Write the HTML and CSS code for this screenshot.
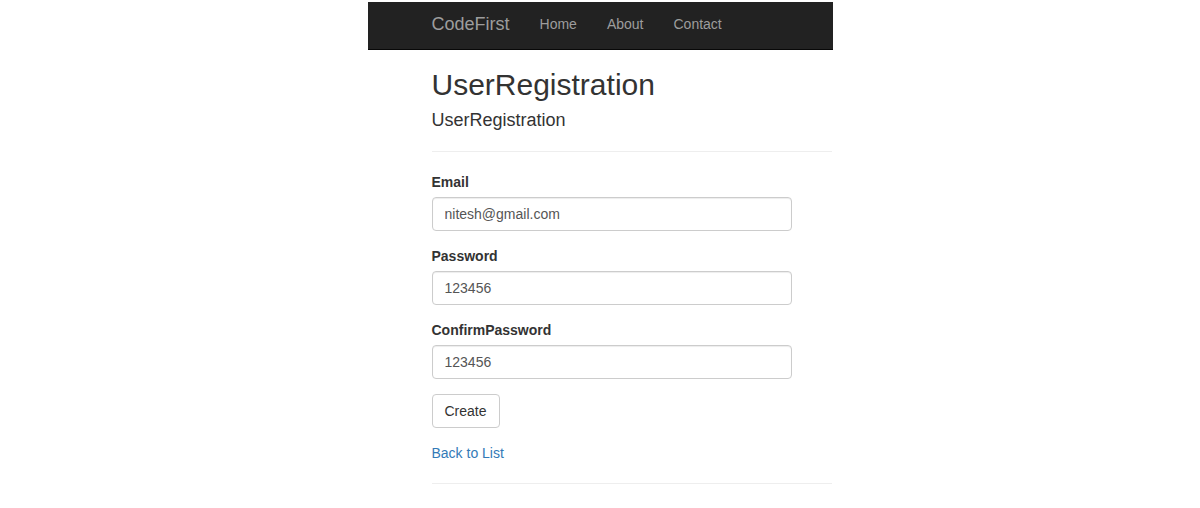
FILE: index.html
```html
<!DOCTYPE html>
<html>
<head>
<meta charset="utf-8">
<title>UserRegistration</title>
<link rel="stylesheet" href="styles.css">
</head>
<body>
<div class="page">
  <nav class="navbar">
    <a class="brand" href="#">CodeFirst</a>
    <ul class="nav">
      <li><a href="#">Home</a></li>
      <li><a href="#">About</a></li>
      <li><a href="#">Contact</a></li>
    </ul>
  </nav>
  <div class="body-content">
    <h2 class="title">UserRegistration</h2>
    <form class="form">
      <h4 class="subtitle">UserRegistration</h4>
      <hr class="rule">
      <div class="form-group">
        <label class="label">Email</label>
        <input class="input" type="text" value="nitesh@gmail.com">
      </div>
      <div class="form-group">
        <label class="label">Password</label>
        <input class="input" type="text" value="123456">
      </div>
      <div class="form-group">
        <label class="label">ConfirmPassword</label>
        <input class="input" type="text" value="123456">
      </div>
      <div class="form-group">
        <button class="btn" type="button">Create</button>
      </div>
    </form>
    <div class="back"><a class="link" href="#">Back to List</a></div>
    <hr class="rule">
  </div>
</div>
</body>
</html>
```

FILE: styles.css
```css
html, body {
  margin: 0;
  padding: 0;
  background: #fff;
}
body {
  font-family: "Liberation Sans", Arial, Helvetica, sans-serif;
  font-size: 14px;
  line-height: 20px;
  color: #333;
}
.page {
  width: 465px;
  margin: 0 auto;
}
.navbar {
  margin-top: 2px;
  height: 48px;
  box-sizing: border-box;
  background: #222;
  border-bottom: 1px solid #080808;
  display: flex;
  align-items: flex-start;
  padding-left: 49px;
}
.brand {
  font-size: 18px;
  line-height: 20px;
  padding: 12px 15px;
  color: #9d9d9d;
  text-decoration: none;
}
.nav {
  list-style: none;
  margin: 0;
  padding: 0;
  display: flex;
}
.nav a {
  display: block;
  padding: 12px 15px;
  line-height: 20px;
  color: #9d9d9d;
  text-decoration: none;
}
.body-content {
  padding-left: 64px;
  padding-right: 1px;
  overflow: hidden;
}
.title {
  font-size: 30px;
  font-weight: 500;
  line-height: 33px;
  margin: 18px 0 10px;
}
.form {
  margin: 0;
}
.subtitle {
  font-size: 18px;
  font-weight: 500;
  line-height: 19.8px;
  margin: 10px 0 10px;
}
.rule {
  margin: 20px 0;
  border: 0;
  border-top: 1px solid #eee;
  height: 0;
}
.form-group {
  margin-bottom: 15px;
}
.label {
  display: block;
  font-weight: bold;
  margin-bottom: 5px;
}
.input {
  display: block;
  box-sizing: border-box;
  width: 360px;
  height: 34px;
  padding: 6px 12px;
  font-family: inherit;
  font-size: 14px;
  line-height: 20px;
  color: #555;
  background: #fff;
  border: 1px solid #ccc;
  border-radius: 4px;
  box-shadow: inset 0 1px 1px rgba(0,0,0,.075);
  margin: 0;
  outline: none;
}
.btn {
  display: inline-block;
  box-sizing: border-box;
  height: 34px;
  padding: 6px 12px;
  font-family: inherit;
  font-size: 14px;
  line-height: 20px;
  color: #333;
  background: #fff;
  border: 1px solid #ccc;
  border-radius: 4px;
  margin: 0;
}
.back {
  line-height: 20px;
}
.link {
  color: #337ab7;
  text-decoration: none;
}
```
